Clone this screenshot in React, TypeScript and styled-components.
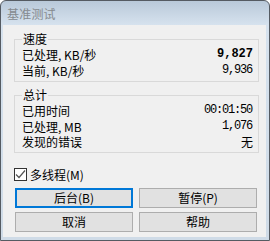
import styled, { createGlobalStyle } from "styled-components";

const GlobalStyle = createGlobalStyle`
  html, body {
    margin: 0;
    padding: 0;
    background: #ffffff;
  }
  body {
    font-family: "Noto Sans CJK SC", "Noto Sans", sans-serif;
    font-size: 12px;
    color: #000;
  }
`;

const speed = [
  { label: "已处理, KB/秒", value: "9,827", bold: true },
  { label: "当前, KB/秒", value: "9,936", bold: false },
];

const totals = [
  { label: "已用时间", value: "00:01:50" },
  { label: "已处理, MB", value: "1,076" },
  { label: "发现的错误", value: "无", cjk: true },
];

function App() {
  return (
    <>
      <GlobalStyle />
      <Window>
        <TitleBar>基准测试</TitleBar>
        <Client>
          <Group>
            <Legend>速度</Legend>
            {speed.map((r) => (
              <Row key={r.label}>
                <span>{r.label}</span>
                <Value $bold={r.bold}>{r.value}</Value>
              </Row>
            ))}
          </Group>

          <Group $gap>
            <Legend>总计</Legend>
            {totals.map((r) => (
              <Row key={r.label}>
                <span>{r.label}</span>
                <Value $cjk={r.cjk}>{r.value}</Value>
              </Row>
            ))}
          </Group>

          <CheckRow>
            <CheckBox>
              <svg width="11" height="11" viewBox="0 0 11 11">
                <polyline
                  points="1,5.5 4,8.5 10,1.5"
                  fill="none"
                  stroke="#555"
                  strokeWidth="1.2"
                />
              </svg>
            </CheckBox>
            <span>多线程(M)</span>
          </CheckRow>

          <Buttons>
            <Button $focused>后台(B)</Button>
            <Button>暂停(P)</Button>
            <Button>取消</Button>
            <Button>帮助</Button>
          </Buttons>
        </Client>
      </Window>
    </>
  );
}

export default App;

/* Styled Components */

const Window = styled.div`
  width: 270px;
  height: 241px;
  box-sizing: border-box;
  border: 1px solid #555b62;
  border-radius: 6px 6px 0 0;
  background: linear-gradient(#b9c9d9 0px, #d6e2ee 24px, #cfdbe7 100%);
  display: flex;
  flex-direction: column;
  overflow: hidden;
`;

const TitleBar = styled.div`
  height: 24px;
  padding: 1px 0 0 6px;
  box-sizing: border-box;
  display: flex;
  align-items: center;
  color: #858a8f;
  font-size: 12px;
  letter-spacing: 0.2px;
`;

const Client = styled.div`
  flex: 1;
  margin: 0 3px 3px 2px;
  background: #f0f0f0;
  padding: 7px 0 0 11px;
  display: flex;
  flex-direction: column;
`;

const Group = styled.fieldset<{ $gap?: boolean }>`
  margin: ${(p) => (p.$gap ? "6px" : "0")} 0 0 0;
  width: 245px;
  box-sizing: border-box;
  min-inline-size: 0;
  border: 1px solid #d9d9d9;
  padding: 1px 5px ${(p) => (p.$gap ? "2px" : "3px")} 7px;
`;

const Legend = styled.legend`
  padding: 0 1px;
  margin: 0;
  line-height: 14px;
  font-size: 12px;
`;

const Row = styled.div`
  display: flex;
  justify-content: space-between;
  align-items: center;
  height: 15.5px;
  line-height: 15.5px;
  white-space: nowrap;
`;

const Value = styled.span<{ $bold?: boolean; $cjk?: boolean }>`
  font-family: ${(p) =>
    p.$cjk ? `"Noto Sans CJK SC", sans-serif` : `"Liberation Mono", monospace`};
  font-size: 12px;
  font-weight: ${(p) => (p.$bold ? 700 : 400)};
  letter-spacing: ${(p) => (p.$bold || p.$cjk ? "0" : "-1.2px")};
  margin-right: ${(p) => (p.$bold || p.$cjk ? "0" : "1px")};
`;

const CheckRow = styled.div`
  margin-top: 15px;
  height: 13px;
  display: flex;
  align-items: center;
  gap: 3px;
  white-space: nowrap;
`;

const CheckBox = styled.span`
  width: 13px;
  height: 13px;
  box-sizing: border-box;
  border: 1px solid #333;
  background: #fff;
  display: flex;
  align-items: center;
  justify-content: center;
`;

const Buttons = styled.div`
  margin: 7px 0 0 1px;
  display: grid;
  grid-template-columns: 118px 118px;
  grid-auto-rows: 20px;
  gap: 4px 6px;
`;

const Button = styled.div<{ $focused?: boolean }>`
  box-sizing: border-box;
  background: #e1e1e1;
  border: ${(p) => (p.$focused ? "2px solid #0078d7" : "1px solid #adadad")};
  display: flex;
  align-items: center;
  justify-content: center;
  font-size: 12px;
  white-space: nowrap;
`;
